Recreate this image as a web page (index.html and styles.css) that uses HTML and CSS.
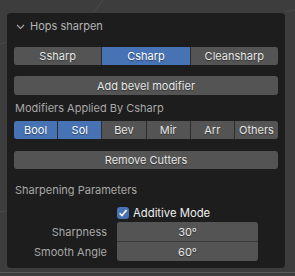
FILE: index.html
```html
<!DOCTYPE html>
<html lang="en">
<head>
    <meta charset="UTF-8">
    <title>Hops sharpen</title>
    <link rel="stylesheet" href="styles.css">
</head>
<body>
    <svg class="grid-lines" width="295" height="276">
        <line x1="103" y1="0" x2="93" y2="13" stroke="#4a4a4a" stroke-width="1"/>
        <line x1="0" y1="44" x2="7" y2="42" stroke="#4a4a4a" stroke-width="1"/>
        <line x1="0" y1="212" x2="7" y2="211" stroke="#4a4a4a" stroke-width="1"/>
        <line x1="285" y1="12" x2="295" y2="10" stroke="#4a4a4a" stroke-width="1"/>
    </svg>

    <div class="panel">
        <div class="header">
            <svg class="chevron" width="9" height="6" viewBox="0 0 9 6">
                <polyline points="1,1 4.5,4.5 8,1" fill="none" stroke="#a8a8a8" stroke-width="1.1"/>
            </svg>
            <span>Hops sharpen</span>
        </div>

        <div class="content">
            <!-- mode switch -->
            <div class="seg seg-3">
                <div class="btn">Ssharp</div>
                <div class="btn active">Csharp</div>
                <div class="btn">Cleansharp</div>
            </div>

            <div class="btn single bevel">Add bevel modifier</div>

            <div class="label modifiers-label">Modifiers Applied By Csharp</div>

            <div class="seg seg-6">
                <div class="btn active">Bool</div>
                <div class="btn active">Sol</div>
                <div class="btn">Bev</div>
                <div class="btn">Mir</div>
                <div class="btn">Arr</div>
                <div class="btn">Others</div>
            </div>

            <div class="btn single remove">Remove Cutters</div>

            <div class="label params-label">Sharpening Parameters</div>

            <div class="check-row">
                <div class="checkbox">
                    <svg width="12" height="12" viewBox="0 0 12 12">
                        <polyline points="2.6,6.2 5,8.6 9.6,3" fill="none" stroke="#ffffff" stroke-width="1.6"/>
                    </svg>
                </div>
                <span>Additive Mode</span>
            </div>

            <div class="fields">
                <div class="field-row">
                    <div class="field-label">Sharpness</div>
                    <div class="field top">30°</div>
                </div>
                <div class="field-row">
                    <div class="field-label">Smooth Angle</div>
                    <div class="field bottom">60°</div>
                </div>
            </div>
        </div>
    </div>

    <div class="bottom-edge"></div>
</body>
</html>
```

FILE: styles.css
```css
body {
    margin: 0;
    width: 295px;
    height: 276px;
    background: #3d3d3d;
    font-family: 'Inter', 'DejaVu Sans', sans-serif;
    font-size: 11px;
    color: #e5e5e5;
    position: relative;
    overflow: hidden;
}
.grid-lines {
    position: absolute;
    left: 0;
    top: 0;
}
.panel {
    position: relative;
    margin-left: 7px;
    margin-top: 13px;
    width: 278px;
    height: 255px;
    background: #1d1d1d;
    border-radius: 4px;
}
.header {
    height: 26px;
    display: flex;
    align-items: center;
    padding-left: 9px;
    color: #b4b4b4;
    font-size: 11px;
}
.chevron {
    margin-right: 5px;
    margin-top: 1px;
}
.content {
    padding: 0 7px;
}
.seg {
    display: flex;
    margin-top: 8px;
    height: 18px;
    border-radius: 3px;
    overflow: hidden;
    gap: 1px;
    background: #2c2c2c;
}
.btn {
    background: #545454;
    color: #e5e5e5;
    display: flex;
    align-items: center;
    justify-content: center;
    text-shadow: 0 1px 1px rgba(0, 0, 0, 0.4);
}
.btn.active {
    background: #4772b3;
    color: #ffffff;
}
.seg-3 .btn {
    flex: 1;
}
.seg-6 .btn {
    flex: 1;
}
.seg-6 {
    margin-top: 5px;
}
.single {
    height: 19px;
    border-radius: 3px;
}
.bevel {
    margin-top: 11px;
}
.remove {
    margin-top: 12px;
    height: 18px;
}
.label {
    height: 16px;
    line-height: 16px;
    color: #a8a8a8;
    padding-left: 1px;
}
.modifiers-label {
    margin-top: 5px;
}
.params-label {
    margin-top: 13px;
}
.check-row {
    display: flex;
    align-items: center;
    height: 14px;
    margin-top: 8px;
    padding-left: 103px;
    color: #eeeeee;
    font-size: 11.3px;
}
.checkbox {
    width: 12px;
    height: 12px;
    background: #4772b3;
    border-radius: 3px;
    margin-right: 4px;
    display: flex;
}
.fields {
    margin-top: 2px;
}
.field-row {
    display: flex;
    align-items: center;
}
.field-label {
    width: 93px;
    padding-right: 10px;
    text-align: right;
    color: #a8a8a8;
}
.field {
    width: 141px;
    height: 19px;
    background: #545454;
    display: flex;
    align-items: center;
    justify-content: center;
    text-shadow: 0 1px 1px rgba(0, 0, 0, 0.4);
}
.field.top {
    height: 20px;
    border-radius: 3px 3px 0 0;
    border-bottom: 1px solid #3a3a3a;
    box-sizing: border-box;
}
.field.bottom {
    border-radius: 0 0 3px 3px;
}
.bottom-edge {
    position: absolute;
    left: 0;
    top: 272px;
    width: 295px;
    height: 1px;
    background: #5a5a5a;
}
```
